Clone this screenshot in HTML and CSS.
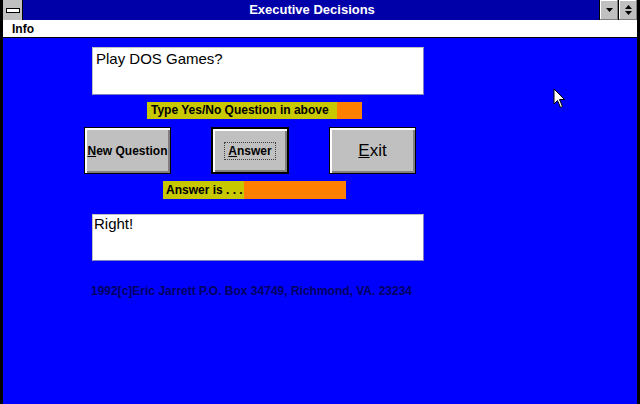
FILE: index.html
```html
<!DOCTYPE html>
<html>
<head>
<meta charset="utf-8">
<link rel="stylesheet" href="styles.css">
</head>
<body>
<div class="window">
  <div class="titlebar">
    <div class="sysbox"><div class="sysbar"></div></div>
    <div class="title">Executive Decisions</div>
    <div class="tbtn">
      <svg width="9" height="6" viewBox="0 0 9 6"><polygon points="1,1 8,1 4.5,5" fill="#000"/></svg>
    </div>
    <div class="tbtn">
      <svg width="9" height="12" viewBox="0 0 9 12"><polygon points="4.5,1 8,5 1,5" fill="#000"/><polygon points="1,7 8,7 4.5,11" fill="#000"/></svg>
    </div>
  </div>
  <div class="menubar"><span class="menu">Info</span></div>
  <div class="client">
    <div class="textbox tb1">Play DOS Games?</div>
    <div class="label lab1"><span class="ltext">Type Yes/No Question in above</span></div>
    <div class="buttons">
      <div class="btn b1"><span><u>N</u>ew Question</span></div>
      <div class="btn b2 default"><span class="focus"><u>A</u>nswer</span></div>
      <div class="btn b3"><span class="big"><u>E</u>xit</span></div>
    </div>
    <div class="label lab2"><span class="ltext">Answer is . . .</span></div>
    <div class="textbox tb2">Right!</div>
    <div class="copy">1992[c]Eric Jarrett P.O. Box 34749, Richmond, VA. 23234</div>
    <svg class="cursor" width="14" height="22" viewBox="0 0 14 22"><path d="M1 1 L1 16 L4.5 12.5 L7.5 19.5 L9.5 18.5 L6.5 11.5 L11.5 11.5 Z" fill="#fff" stroke="#000" stroke-width="1"/></svg>
  </div>
</div>
</body>
</html>
```
FILE: styles.css
```css
html, body {
  margin: 0;
  padding: 0;
  background: #000;
}
body {
  width: 640px;
  height: 404px;
  overflow: hidden;
  font-family: "Liberation Sans", Arial, sans-serif;
}
.window {
  width: 640px;
  height: 404px;
  box-sizing: border-box;
  padding: 0 3px 0 3px;
  display: flex;
  flex-direction: column;
  background: #000;
}
.titlebar {
  height: 20px;
  display: flex;
  align-items: stretch;
  background: #0000a8;
}
.sysbox {
  width: 19px;
  background: #c0c0c0;
  display: flex;
  align-items: center;
  justify-content: center;
  border-right: 1px solid #000;
}
.sysbar {
  width: 12px;
  height: 3px;
  background: #fff;
  border: 1px solid #000;
}
.title {
  flex: 1;
  color: #fff;
  font-weight: bold;
  font-size: 13px;
  text-align: center;
  line-height: 20px;
  padding-left: 2px;
}
.tbtn {
  width: 18px;
  background: #c0c0c0;
  border-left: 1px solid #000;
  display: flex;
  align-items: center;
  justify-content: center;
  box-shadow: inset -1px -1px 0 #808080, inset 1px 1px 0 #fff;
}
.menubar {
  height: 17px;
  background: #fff;
  border-bottom: 1px solid #000;
  display: flex;
  align-items: center;
}
.menu {
  font-weight: bold;
  font-size: 12px;
  padding-left: 9px;
  color: #000;
}
.client {
  flex: 1;
  position: relative;
  background: #0000ff;
  display: flex;
  flex-direction: column;
  align-items: flex-start;
}
.textbox {
  width: 332px;
  height: 48px;
  box-sizing: border-box;
  background: #fff;
  border: 1px solid #c0c0c0;
  border-right-color: #8080c0;
  border-bottom-color: #8080c0;
  margin-left: 89px;
  color: #000;
}
.tb1 {
  margin-top: 9px;
  font-size: 15px;
  padding: 2px 0 0 3px;
}
.tb2 {
  margin-top: 15px;
  height: 47px;
  font-size: 15px;
  padding: 0 0 0 1px;
  line-height: 17px;
}
.label {
  background: #ff8000;
  height: 17px;
  box-sizing: border-box;
  display: flex;
  align-items: center;
}
.ltext {
  background: #c8c800;
  height: 100%;
  font-weight: bold;
  font-size: 12px;
  line-height: 17px;
  padding: 0 4px 0 4px;
  color: #000;
  white-space: nowrap;
}
.lab1 {
  margin-top: 7px;
  margin-left: 144px;
  width: 215px;
}
.lab1 .ltext { width: 190px; box-sizing: border-box; }
.lab2 {
  margin-top: 7px;
  margin-left: 160px;
  width: 183px;
  height: 18px;
}
.lab2 .ltext { width: 81px; box-sizing: border-box; line-height: 18px; padding-left: 3px; }
.buttons {
  margin-top: 8px;
  display: flex;
  height: 47px;
  margin-left: 81px;
}
.btn {
  height: 47px;
  box-sizing: border-box;
  background: #c0c0c0;
  border: 1px solid #000;
  box-shadow: inset 2px 2px 0 #fff, inset -2px -2px 0 #808080;
  display: flex;
  align-items: center;
  justify-content: center;
  font-weight: bold;
  font-size: 12px;
  color: #000;
}
.b1 { width: 87px; }
.b2 { width: 78px; margin-left: 40px; }
.b3 { width: 87px; margin-left: 40px; }
.default {
  border: 2px solid #000;
}
.focus {
  outline: 1px dotted #404040;
  padding: 1px 3px;
}
.big {
  font-weight: normal;
  font-size: 17px;
}
.copy {
  margin-top: 23px;
  margin-left: 88px;
  font-weight: bold;
  font-size: 12px;
  color: #000060;
  white-space: nowrap;
}
.cursor {
  position: absolute;
  left: 550px;
  top: 50px;
}
```
